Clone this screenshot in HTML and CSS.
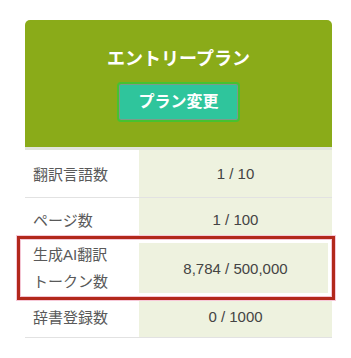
FILE: index.html
```html
<!DOCTYPE html>
<html lang="ja">
<head>
<meta charset="utf-8">
<link rel="stylesheet" href="styles.css">
</head>
<body>
<div class="page">
  <div class="card">
    <div class="plan-head">
      <div class="plan-title">エントリープラン</div>
      <button class="plan-btn">プラン変更</button>
    </div>
    <div class="row r1"><div class="label">翻訳言語数</div><div class="value">1 / 10</div></div>
    <div class="row r2"><div class="label">ページ数</div><div class="value">1 / 100</div></div>
    <div class="row r3"><div class="label two">生成AI翻訳<br>トークン数</div><div class="value">8,784 / 500,000</div></div>
    <div class="row r4"><div class="label">辞書登録数</div><div class="value">0 / 1000</div></div>
  </div>
  <div class="highlight"></div>
</div>
</body>
</html>
```

FILE: styles.css
```css
html, body {
  margin: 0;
  padding: 0;
  background: #ffffff;
}
body {
  width: 351px;
  height: 358px;
  overflow: hidden;
  font-family: "Liberation Sans", "Noto Sans CJK JP", sans-serif;
}
.page {
  position: relative;
  padding: 20px 0 0 25px;
}
.card {
  width: 307px;
}
.plan-head {
  background: #8aab19;
  border-radius: 5px 5px 0 0;
  border-bottom: 3px solid #e1e4dc;
  display: flex;
  flex-direction: column;
  align-items: center;
  box-sizing: border-box;
  height: 130px;
  padding-top: 26px;
}
.plan-title {
  color: #ffffff;
  font-size: 18px;
  font-weight: 700;
  line-height: 26px;
}
.plan-btn {
  margin-top: 10px;
  width: 123px;
  height: 40px;
  background: #2fc59c;
  border: 2px solid #46c230;
  box-shadow: inset 0 0 0 1px #7f9a88;
  border-radius: 4px;
  color: #ffffff;
  font-family: "Liberation Sans", "Noto Sans CJK JP", sans-serif;
  font-size: 16px;
  font-weight: 700;
  padding: 0;
  line-height: 36px;
}
.row {
  display: flex;
  border-bottom: 1px solid #e2e2e2;
}
.label {
  width: 114px;
  box-sizing: border-box;
  padding-left: 8px;
  background: #ffffff;
  color: #595959;
  font-size: 15px;
  display: flex;
  align-items: center;
}
.label.two {
  line-height: 27px;
}
.value {
  flex: 1;
  background: #eef2df;
  color: #444444;
  font-size: 15px;
  display: flex;
  align-items: center;
  justify-content: center;
}
.r1 { height: 47px; }
.r2 { height: 42px; }
.r3 { height: 54px; }
.r4 { height: 41px; }
.highlight {
  position: absolute;
  left: 17px;
  top: 236px;
  width: 318px;
  height: 64px;
  box-sizing: border-box;
  border: 3px solid #b2281b;
  box-shadow: 0 0 0 1px #f7c9d8, inset 0 0 0 1px #f4c6d4, inset 0 0 0 4px #ffffff;
}
```
